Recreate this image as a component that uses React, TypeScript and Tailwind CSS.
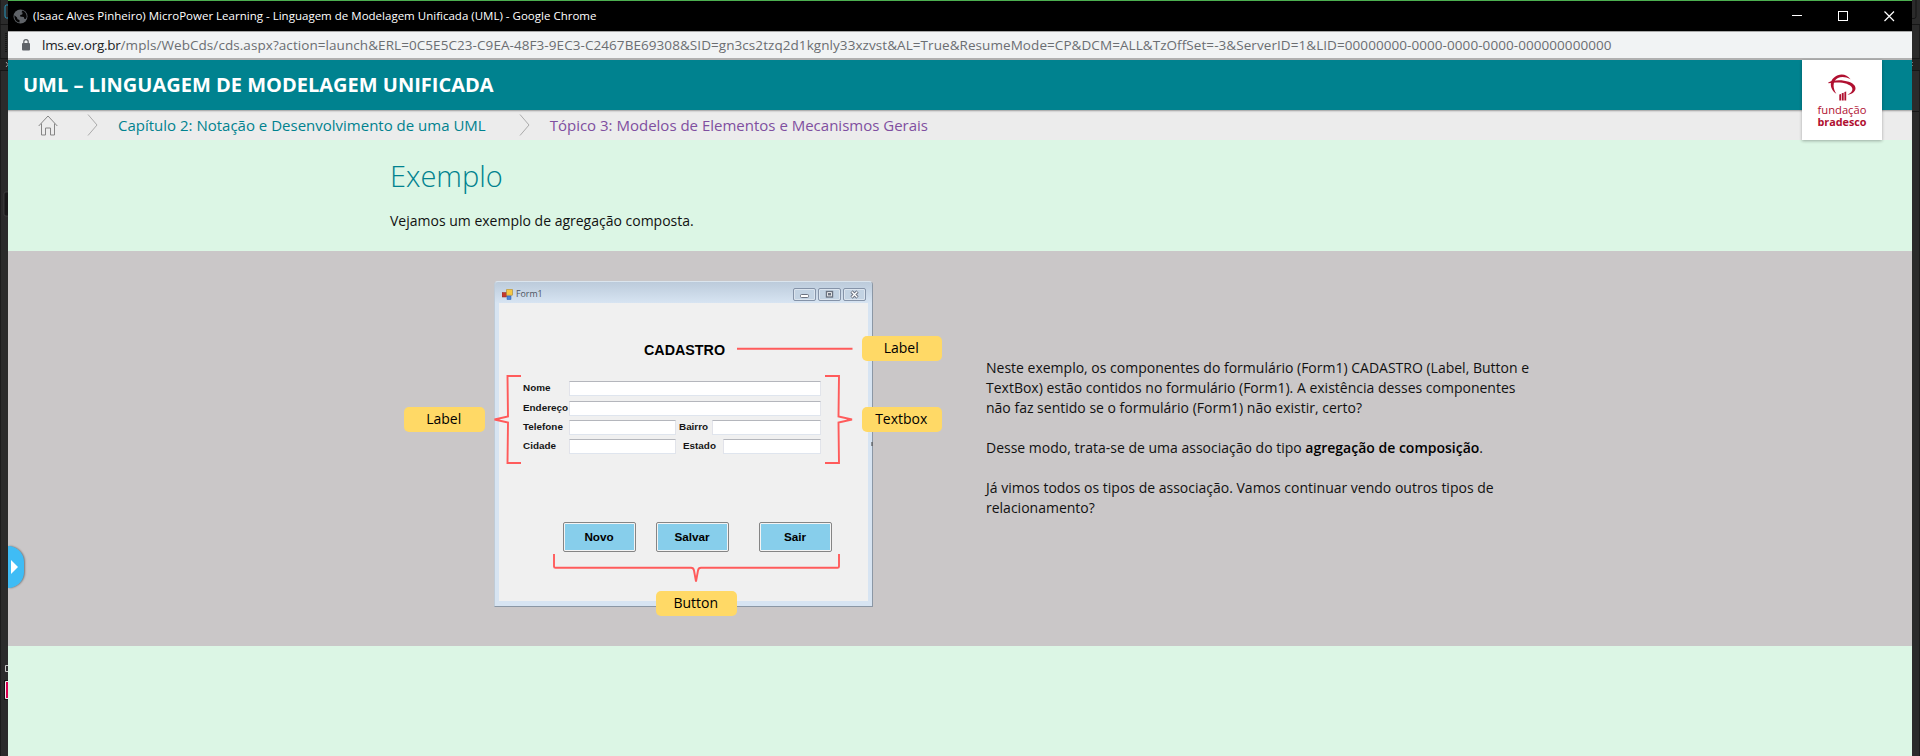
import type { ReactNode } from 'react';

const SANS = "font-['Open_Sans','Noto_Sans',sans-serif]";
const ARIAL = "font-['Liberation_Sans',Arial,sans-serif]";

function DesktopEdgeLeft() {
  return (
    <svg className="block h-[756px] w-2 shrink-0" viewBox="0 0 8 756">
      <rect width="8" height="756" fill="#2b2b2b" />
      <rect width="1" height="756" fill="#1c1c1c" />
      <path d="M8 5H6.5Q5 5 5 7v9q0 2 1.5 2H8" fill="none" stroke="#2596be" />
      <path d="M0 24.5H8M0 58.5H8M0 70.5H8" stroke="#161616" />
      <rect y="59" width="8" height="11" fill="#232323" />
      <path d="M6 33v20" stroke="#161616" strokeWidth="2" strokeDasharray="1 1" />
      <path d="M6 62l2 2.5L6 67" fill="none" stroke="#a0a0a0" />
      <path d="M8 192H6q-2 0-2 2v20q0 2 2 2h2" fill="#181818" stroke="#454545" strokeWidth=".7" />
      <path d="M8 665.5H5.5v6H8" fill="none" stroke="#c8c8c8" />
      <rect x="4" y="680" width="4" height="20" fill="#111" />
      <path d="M8 681.5H5.5v17H8" fill="#d8004f" stroke="#eee" />
    </svg>
  );
}

function DesktopEdgeRight() {
  return (
    <svg className="block h-[756px] w-2 shrink-0" viewBox="0 0 8 756">
      <rect width="8" height="756" fill="#2b2b2b" />
      <path d="M0 18.5H2q2 0 2-2V0" fill="none" stroke="#151515" />
      <path d="M0 24.5H8M0 58.5H8M0 70.5H8M0 111.5H8" stroke="#161616" />
      <rect y="59" width="8" height="11" fill="#232323" />
      <path d="M7.5 25v33M7.5 71v685" stroke="#1c1c1c" />
      <path d="M0 62.5h1M0 65.5h1" stroke="#777" />
    </svg>
  );
}

function TitleBar() {
  return (
    <div className="flex h-8 items-center border-t border-b border-t-[#4caf50] border-b-[#a8a8a8] bg-black pl-[5px] text-white">
      <svg className="size-[15px] shrink-0" viewBox="0 0 15 15">
        <circle cx="7.5" cy="7.5" r="7" fill="#5f6368" />
        <path d="M1.5 6.3L4 8.5l.5 1.8 2 .8v2.5C3.5 13.2 1 10.5 1.500 6.300z" fill="#050505" />
        <path d="M9.5 1.6c2.8 1 4.300 3.300 4.200 6.300l-.9 2.200-1.600-.4-.4-1.700-3.600-.4V5.900l2-.5.5-1.600-1.200-.6z" fill="#050505" />
      </svg>
      <span className="ml-[5px] text-[11.5px] leading-none whitespace-nowrap">
        <span className="tracking-[0.01px]">
          (Isaac Alves Pinheiro) MicroPower Learning - Linguagem de Modelagem Unificada (UML) - Google Chrome
        </span>
      </span>
      <svg className="mr-[17px] ml-auto h-[11px] w-[104px]" viewBox="0 0 104 11" fill="none" stroke="#fff">
        <path d="M1 4.5h10" />
        <rect x="47.5" y=".5" width="9" height="9" />
        <path d="M93.5 .5l9.500 9.500M103 .5l-9.500 9.500" strokeWidth="1.200" />
      </svg>
    </div>
  );
}

function AddressBar() {
  return (
    <div className="flex h-7 items-center border-b-2 border-[#b0b0b0] bg-[#f1f3f4] pl-[14px]">
      <svg className="h-3 w-2 shrink-0" viewBox="0 0 8 12">
        <rect y="4" width="8" height="7.5" rx="1" fill="#5f6368" />
        <path d="M1.8 4.5V2.8a2.2 2.2 0 0 1 4.4 0v1.7" fill="none" stroke="#5f6368" strokeWidth="1.200" />
      </svg>
      <p className="ml-[12px] pt-[2px] text-[13.5px] leading-none whitespace-nowrap text-[#6b6e72]">
        <span className="tracking-[-0.27px] text-[#202124]">lms.ev.org.br</span>
        <span className="tracking-[0.068px]">
          /mpls/WebCds/cds.aspx?action=launch&amp;ERL=0C5E5C23-C9EA-48F3-9EC3-C2467BE69308&amp;SID=gn3cs2tzq2d1kgnly33xzvst&amp;AL=True&amp;ResumeMode=CP&amp;DCM=ALL&amp;TzOffSet=-3&amp;ServerID=1&amp;LID=00000000-0000-0000-0000-000000000000
        </span>
      </p>
    </div>
  );
}

function Chevron({ className }: { className: string }) {
  return (
    <svg className={`h-[22px] w-[11px] shrink-0 ${className}`} viewBox="0 0 11 22" fill="none" stroke="#aaa">
      <path d="M1 .5l9 10.5-9 10.5" />
    </svg>
  );
}

function CourseHeader() {
  return (
    <header className="relative">
      <div className="flex h-[50px] items-center bg-[#00828f] pl-[15px]">
        <h1 className="text-xl leading-none font-bold text-white">UML – LINGUAGEM DE MODELAGEM UNIFICADA</h1>
      </div>
      <nav className="flex h-[30px] items-center bg-[#ececec] text-[15px] leading-none shadow-[inset_0_2px_2px_-1px_rgba(0,0,0,0.35)]">
        <svg className="ml-[30px] h-[21px] w-5 shrink-0" viewBox="0 0 20 21" fill="none" stroke="#858585">
          <path d="M.7 11L10 1l9.300 10M3.500 8.500v11.500h4v-7h5v7h4V8.500" />
        </svg>
        <Chevron className="ml-[29px]" />
        <span className="ml-[20px] text-[#00828f]">Capítulo 2: Notação e Desenvolvimento de uma UML</span>
        <Chevron className="ml-[33px]" />
        <span className="ml-[20px] text-[#7f4fa0]">Tópico 3: Modelos de Elementos e Mecanismos Gerais</span>
      </nav>
      <div className="absolute top-0 right-[30px] flex h-20 w-20 flex-col items-center bg-white pt-[14px] text-[#b01030] shadow-[0_1px_3px_rgba(0,0,0,0.3)]">
        <svg className="h-[27px] w-[28px]" viewBox="0 0 28 27" fill="currentColor">
          <path d="M22.500 5.200C19.500 1 14.500-.6 9.800 1.200 4 3.400 1.700 8.500 3.300 13.500c.8 2.600 2.500 4.800 5 6.200C5.600 15.500 4.600 10.500 6.800 6.800 9.300 2.600 16 1.600 22.500 5.200z" />
          <path d="M0 8.700C4 6.500 10 5.800 16 6.700c7 1 11.800 3.800 11.500 8-.2 3-3.600 5.400-8 6.100 3-1.500 5-3.300 4.900-5.700C24.100 11.500 18.500 9.200 12 8.600 8 8.200 4 8.400.5 9.300z" />
          <path d="M11.300 20.500l1.700-.5v6.500h-1.700zM13.700 19.300l2-.6v7.800h-2zM16.400 18l1.800-.6v9.100h-1.800z" />
        </svg>
        <span className="mt-[3px] text-[11.2px] leading-[12px]">fundação</span>
        <span className="text-[10.8px] leading-[12px] font-bold">bradesco</span>
      </div>
    </header>
  );
}

function Callout({ children, className }: { children: ReactNode; className: string }) {
  return (
    <div className={`absolute flex h-[25px] w-[80.500px] items-center justify-center rounded-[5px] bg-[#ffd966] pr-px pb-px text-sm leading-none text-black ${className}`}>
      {children}
    </div>
  );
}

function Field({ className }: { className: string }) {
  return <div className={`h-[15px] border border-t-[#b4b6bc] border-r-[#e2e4ea] border-b-[#dfe5ee] border-l-[#e2e3ea] bg-white ${className}`} />;
}

function FormButton({ children, className = '' }: { children: ReactNode; className?: string }) {
  return (
    <div className={`h-[30px] w-[73px] rounded-[2px] border border-[#858585] bg-[#f4f4f4] p-px ${className}`}>
      <div className="flex h-full items-center justify-center bg-[#87ceeb] pr-px text-[11.7px] leading-none font-bold text-black">{children}</div>
    </div>
  );
}

function WindowButton({ children }: { children: ReactNode }) {
  return (
    <div className="flex h-[13px] w-[23px] items-center justify-center rounded-[2px] border border-[#8593a8] bg-[#c3d3e3] shadow-[inset_0_0_0_1px_rgba(255,255,255,0.4)]">
      <svg className="h-[9px] w-[11px]" viewBox="0 0 11 9" fill="none" stroke="#6a7280">
        {children}
      </svg>
    </div>
  );
}

function FormWindow() {
  return (
    <div className={`ml-[90px] flex h-[326px] w-[379px] flex-col rounded-t-[4px] border border-t-[#dbe5ee] border-r-[#8b97a5] border-b-[#8b97a5] border-l-[#c0cbd6] bg-[#d7e4f2] px-1 pb-[5px] ${ARIAL}`}>
      <div className="-mx-1 flex h-[21px] shrink-0 items-center rounded-t-[3px] bg-linear-to-b from-[#bccbdb] to-[#d7e4f2] pt-[3px] pr-[6px] pl-[7px]">
        <svg className="h-[11px] w-[11px]" viewBox="0 0 11 11">
          <rect x="0" y="3.5" width="4.5" height="4.5" fill="#c43a2e" stroke="#8b2a22" strokeWidth=".5" />
          <rect x="4.5" y=".3" width="6" height="6" rx=".5" fill="#f6c844" stroke="#a8822c" strokeWidth=".6" />
          <rect x="5" y="7" width="4" height="3.5" fill="#4b87dc" stroke="#2a5aa8" strokeWidth=".5" />
        </svg>
        <span className="ml-[3px] pt-px font-['Open_Sans',sans-serif] text-[8.8px] leading-none text-[#4c5460]">Form1</span>
        <div className="ml-auto flex gap-[2px]">
          <WindowButton>
            <rect x="1.500" y="4.500" width="8" height="3" rx="1" fill="#fff" />
          </WindowButton>
          <WindowButton>
            <rect x="2.500" y="1.500" width="6" height="5.500" fill="#fff" strokeWidth="1.400" />
            <rect x="4.500" y="3.500" width="2" height="1.500" />
          </WindowButton>
          <WindowButton>
            <path d="M2.500 1.500l6 6M8.500 1.500l-6 6" strokeWidth="3.200" />
            <path d="M2.800 1.800l5.400 5.400M8.200 1.800l-5.400 5.400" stroke="#fff" strokeWidth="1.300" />
          </WindowButton>
        </div>
      </div>
      <div className="flex flex-1 flex-col bg-[#f0f0f0]">
        <p className="mt-[39px] ml-[145px] text-[14.3px] leading-[16px] font-bold text-black">CADASTRO</p>
        <div className="mt-[23px] ml-[24px] flex w-[298px] flex-col gap-1 text-[9.9px] font-bold text-[#151515]">
          <div className="flex h-[15.500px] items-center">
            <span className="w-[46px]">Nome</span>
            <Field className="flex-1" />
          </div>
          <div className="flex h-[15.500px] items-center">
            <span className="w-[46px]">Endereço</span>
            <Field className="flex-1" />
          </div>
          <div className="flex h-[15.500px] items-center">
            <span className="w-[46px]">Telefone</span>
            <Field className="w-[107px]" />
            <span className="ml-[3px] w-[33px]">Bairro</span>
            <Field className="flex-1" />
          </div>
          <div className="-mt-px flex h-[15.500px] items-center">
            <span className="w-[46px]">Cidade</span>
            <Field className="w-[107px]" />
            <span className="ml-[7px] w-[40px]">Estado</span>
            <Field className="flex-1" />
          </div>
        </div>
        <div className="mt-[68px] ml-[64px] flex">
          <FormButton>Novo</FormButton>
          <FormButton className="ml-[20px]">Salvar</FormButton>
          <FormButton className="ml-[30px]">Sair</FormButton>
        </div>
      </div>
    </div>
  );
}

function Diagram() {
  return (
    <div className="relative h-[335px] w-[539px] shrink-0">
      <FormWindow />
      <svg className="absolute inset-0 h-[335px] w-[539px]" viewBox="404 281 539 335" fill="none" stroke="#ff5b5b" strokeWidth="1.900">
        <path d="M737 348.800H852.500" />
        <path d="M521 376H507.500L508 416.500L494.500 419.500L508 422.500L507.500 463H521" />
        <path d="M825 376H839L838.500 416.500L852 419.500L838.500 422.500L839 463H825" />
        <path d="M554 554V566.500Q554 567.800 555.500 567.800H691Q693.500 567.800 694 570.500L696 581.500L698 570.500Q698.500 567.800 701 567.800H837.500Q839 567.800 839 566.500V554" />
        <path d="M872 442v4" stroke="#555" strokeWidth="1.200" />
      </svg>
      <Callout className="top-[126px] left-0">Label</Callout>
      <Callout className="top-[55px] left-[457.500px]">Label</Callout>
      <Callout className="top-[126px] left-[457.500px]">Textbox</Callout>
      <Callout className="top-[310px] left-[252px]">Button</Callout>
    </div>
  );
}

export default function App() {
  return (
    <div className={`flex h-[756px] w-[1920px] overflow-hidden bg-[#2b2b2b] ${SANS}`}>
      <DesktopEdgeLeft />
      <div className="flex w-[1904px] flex-col bg-[#dcf6e5]">
        <TitleBar />
        <AddressBar />
        <CourseHeader />
        <section className="h-[111px] pt-[16px] pl-[382px]">
          <h2 className="text-[29px] leading-[40px] font-light text-[#00828f]">Exemplo</h2>
          <p className="mt-[15px] text-sm leading-5 text-[#111]">Vejamos um exemplo de agregação composta.</p>
        </section>
        <section className="relative flex h-[395px] items-start bg-[#cac7c8] pt-[30px] pl-[396px]">
          <Diagram />
          <div className="mt-[77px] ml-[43px] flex w-[560px] flex-col gap-5 text-sm leading-5 text-[#111]">
            <p>
              Neste exemplo, os componentes do formulário (Form1) CADASTRO (Label, Button e
              <br />
              TextBox) estão contidos no formulário (Form1). A existência desses componentes
              <br />
              não faz sentido se o formulário (Form1) não existir, certo?
            </p>
            <p>
              Desse modo, trata-se de uma associação do tipo <strong className="font-semibold text-black">agregação de composição</strong>.
            </p>
            <p>
              Já vimos todos os tipos de associação. Vamos continuar vendo outros tipos de
              <br />
              relacionamento?
            </p>
          </div>
          <div className="absolute top-[295px] left-0 flex h-[42px] w-4 items-center rounded-r-full bg-[#3fbcf5] pl-[3px] shadow-[1px_0_2px_rgba(0,0,0,0.4)]">
            <svg className="h-[14px] w-[7px]" viewBox="0 0 7 14">
              <path d="M0 0l7 7-7 7z" fill="#fff" />
            </svg>
          </div>
        </section>
      </div>
      <DesktopEdgeRight />
    </div>
  );
}
